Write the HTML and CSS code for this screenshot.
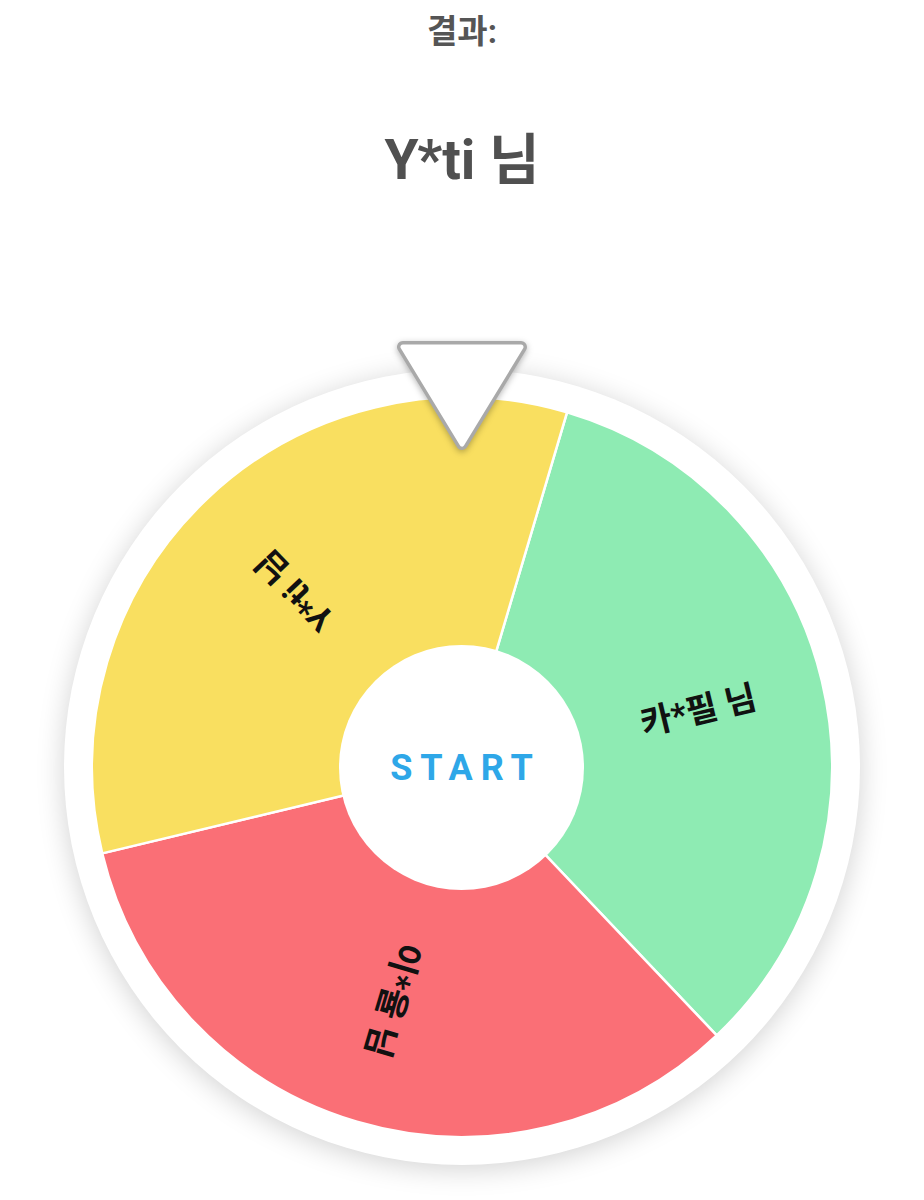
FILE: index.html
```html
<!DOCTYPE html>
<html lang="ko">
<head>
<meta charset="utf-8">
<title>룰렛</title>
<link rel="stylesheet" href="styles.css">
</head>
<body>
<main class="page">
  <h2 class="result-label">결과:</h2>
  <h1 class="result-name">Y*ti 님</h1>

  <section class="roulette">
    <div class="wheel-rim">
      <svg class="wheel" viewBox="0 0 740 740" width="740" height="740">
        <g class="slices">
          <path class="slice slice-green" d="M370 370 L475.1 15.2 A370 370 0 0 1 624.7 638.4 Z"/>
          <path class="slice slice-red" d="M370 370 L624.7 638.4 A370 370 0 0 1 10.2 456.4 Z"/>
          <path class="slice slice-yellow" d="M370 370 L10.2 456.4 A370 370 0 0 1 475.1 15.2 Z"/>
        </g>
        <g class="labels">
          <text class="slice-label" transform="translate(370 370) rotate(-13.5) translate(243 0)">카*필 님</text>
          <text class="slice-label" transform="translate(370 370) rotate(106.5) translate(243 0)">이*율 님</text>
          <text class="slice-label" transform="translate(370 370) rotate(226.5) translate(243 0)">Y*ti 님</text>
        </g>
      </svg>
      <button class="start-btn" type="button">START</button>
    </div>

    <svg class="pointer" viewBox="0 0 140 124" width="140" height="124">
      <polygon class="pointer-edge" points="11,11 129,11 70,108"/>
      <polygon class="pointer-face" points="11,11 129,11 70,108"/>
    </svg>
  </section>
</main>
</body>
</html>
```

FILE: styles.css
```css
html, body {
  margin: 0;
  padding: 0;
  background: #ffffff;
}

body {
  font-family: Roboto, "Noto Sans CJK KR", sans-serif;
  color: #4f4f4f;
}

.page {
  width: 924px;
  display: flex;
  flex-direction: column;
  align-items: center;
  padding-bottom: 40px;
}

.result-label {
  margin: 12px 0 0;
  font-size: 33px;
  line-height: 40px;
  font-weight: 700;
  color: #555555;
}

.result-name {
  margin: 76px 0 0;
  font-size: 55px;
  line-height: 64px;
  font-weight: 700;
  color: #505050;
}

/* wheel + pointer */
.roulette {
  position: relative;
  margin-top: 177px;
  width: 796px;
  height: 796px;
}

.wheel-rim {
  width: 796px;
  height: 796px;
  border-radius: 50%;
  background: #ffffff;
  box-shadow: 0 4px 28px rgba(0, 0, 0, 0.18);
  display: flex;
  align-items: center;
  justify-content: center;
  position: relative;
}

.wheel {
  display: block;
}

.slice {
  stroke: #ffffff;
  stroke-width: 2.5;
  stroke-linejoin: round;
}

.slice-green { fill: #8eebb3; }
.slice-red { fill: #fa6f76; }
.slice-yellow { fill: #f9df60; }

.slice-label {
  font-family: Roboto, "Noto Sans CJK KR", sans-serif;
  font-size: 34px;
  font-weight: 700;
  fill: #111111;
  text-anchor: middle;
  dominant-baseline: central;
}

.start-btn {
  position: absolute;
  left: 50%;
  top: 50%;
  width: 245px;
  height: 245px;
  margin: -122px 0 0 -123px;
  border: none;
  border-radius: 50%;
  background: #ffffff;
  padding: 0 0 0 8px;
  font-family: Roboto, "Noto Sans", sans-serif;
  font-size: 36px;
  font-weight: 700;
  letter-spacing: 0.22em;
  color: #2ea7e8;
  cursor: pointer;
}

.pointer {
  position: absolute;
  left: 328px;
  top: -33px;
  filter: drop-shadow(0 2px 3px rgba(0, 0, 0, 0.28));
}

.pointer-edge {
  fill: #a9a9a9;
  stroke: #a9a9a9;
  stroke-width: 12;
  stroke-linejoin: round;
}

.pointer-face {
  fill: #ffffff;
  stroke: #ffffff;
  stroke-width: 5;
  stroke-linejoin: round;
}
```
